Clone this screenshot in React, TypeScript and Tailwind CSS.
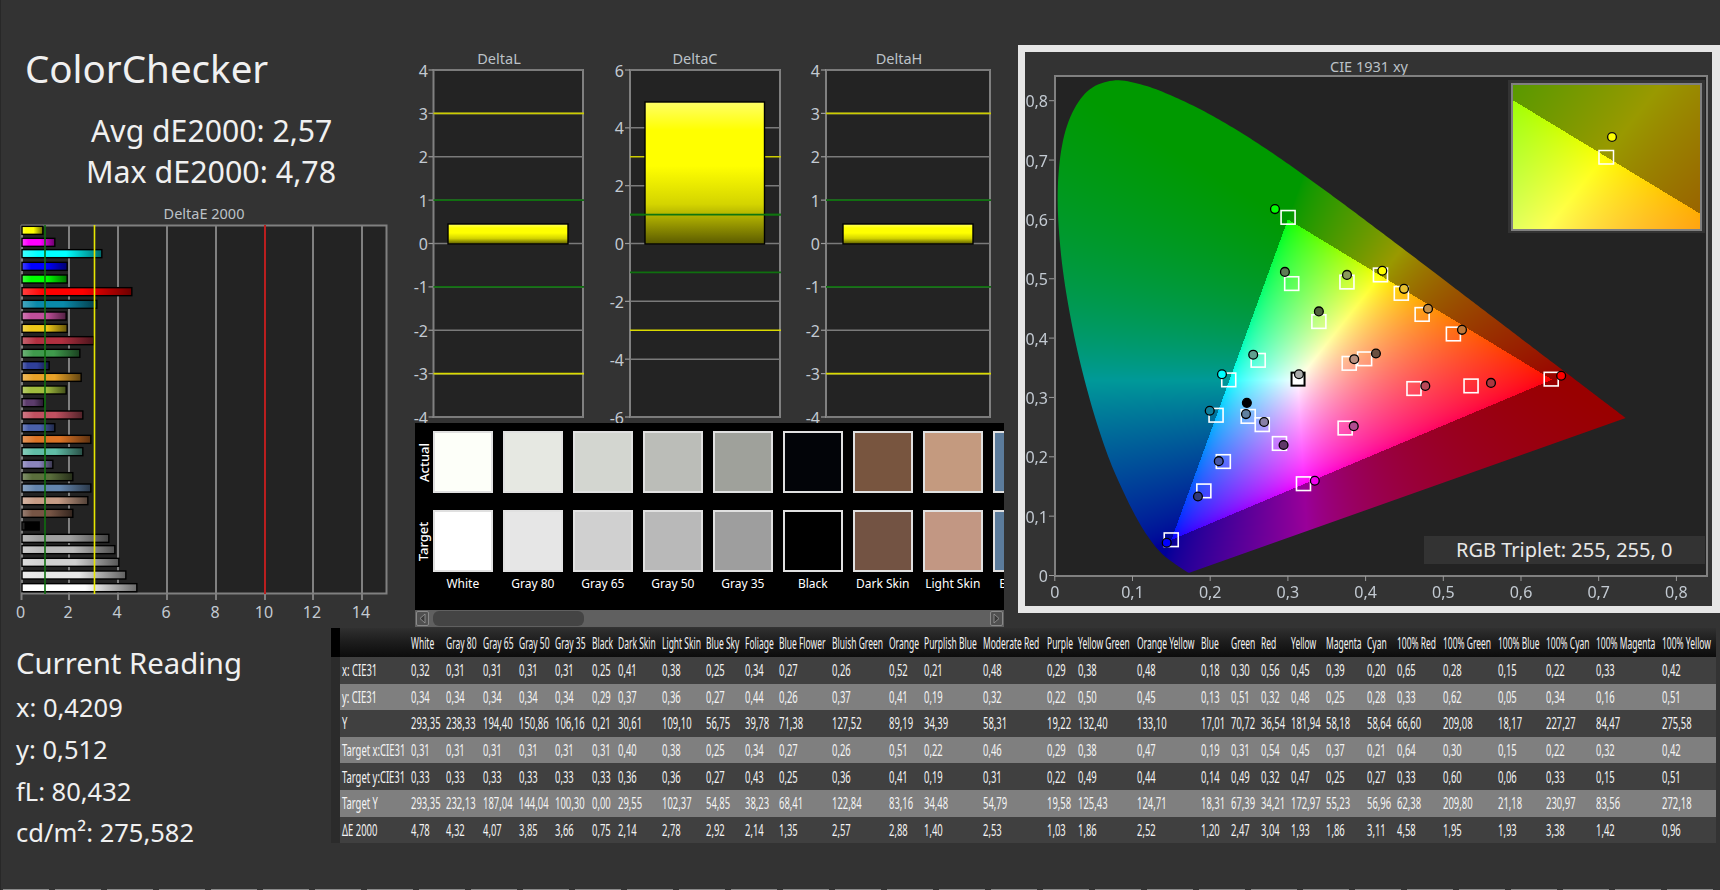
import { useEffect, useRef } from "react";

const LOCUS: [number, number][] = [
  [0.1741, 0.005], [0.1714, 0.0051], [0.1644, 0.0109], [0.1566, 0.0177], [0.144, 0.0297], [0.1355, 0.0399],
  [0.1241, 0.0578], [0.1096, 0.0868], [0.0913, 0.1327], [0.0687, 0.2007], [0.0454, 0.295], [0.0235, 0.4127], [0.0082, 0.5384],
  [0.0039, 0.6548], [0.0139, 0.7502], [0.0389, 0.812], [0.0743, 0.8338], [0.1142, 0.8262], [0.1547, 0.8059], [0.1929, 0.7816],
  [0.2296, 0.7543], [0.2658, 0.7243], [0.3016, 0.6923], [0.3373, 0.6589], [0.3731, 0.6245], [0.4087, 0.5896], [0.4441, 0.5547],
  [0.4788, 0.5202], [0.5125, 0.4866], [0.5448, 0.4544], [0.5752, 0.4242], [0.6029, 0.3965], [0.627, 0.3725], [0.6658, 0.334],
  [0.6915, 0.3083], [0.7079, 0.292], [0.726, 0.274], [0.7347, 0.2653],
];

function smooth(pts: [number, number][]): [number, number][] {
  const out: [number, number][] = [];
  for (let i = 0; i < pts.length - 1; i++) {
    const p0 = pts[Math.max(i - 1, 0)];
    const p1 = pts[i];
    const p2 = pts[i + 1];
    const p3 = pts[Math.min(i + 2, pts.length - 1)];
    for (let k = 0; k < 10; k++) {
      const t = k / 10;
      const f = (a: number, b: number, c: number, d: number) =>
        0.5 * (2 * b + (c - a) * t + (2 * a - 5 * b + 4 * c - d) * t * t + (3 * b - a - 3 * c + d) * t * t * t);
      out.push([f(p0[0], p1[0], p2[0], p3[0]), f(p0[1], p1[1], p2[1], p3[1])]);
    }
  }
  out.push(pts[pts.length - 1]);
  return out;
}

function shade(x: number, y: number): [number, number, number] {
  const X = x / y;
  const Z = (1 - x - y) / y;
  let r = 3.2406 * X - 1.5372 - 0.4986 * Z;
  let g = -0.9689 * X + 1.8758 + 0.0415 * Z;
  let b = 0.0557 * X - 0.204 + 1.057 * Z;
  const inside = Math.min(r, g, b) >= 0;
  r = Math.max(r, 0);
  g = Math.max(g, 0);
  b = Math.max(b, 0);
  const m = Math.max(r, g, b, 1e-6);
  if (inside) {
    const e = 0.66;
    return [255 * Math.pow(r / m, e), 255 * Math.pow(g / m, e), 255 * Math.pow(b / m, e)];
  }
  return [153 * Math.pow(r / m, 0.7), 153 * Math.pow(g / m, 0.7), 153 * (b / m)];
}

function CieCanvas({ w, h, x0, sx, y0, sy, clip, className }: { w: number; h: number; x0: number; sx: number; y0: number; sy: number; clip: boolean; className: string }) {
  const ref = useRef<HTMLCanvasElement>(null);
  useEffect(() => {
    const c = ref.current;
    if (!c) return;
    const ctx = c.getContext("2d");
    if (!ctx) return;
    const img = ctx.createImageData(w, h);
    for (let j = 0; j < h; j++) {
      for (let i = 0; i < w; i++) {
        const x = Math.max((i + 0.5 - x0) / sx, 0.001);
        const y = Math.max((y0 - j - 0.5) / sy, 0.002);
        const [r, g, b] = shade(x, y);
        const o = (j * w + i) * 4;
        img.data[o] = r;
        img.data[o + 1] = g;
        img.data[o + 2] = b;
        img.data[o + 3] = 255;
      }
    }
    ctx.putImageData(img, 0, 0);
    if (clip) {
      ctx.globalCompositeOperation = "destination-in";
      ctx.beginPath();
      smooth(LOCUS).forEach(([x, y], n) => {
        const px = x0 + x * sx;
        const py = y0 - y * sy;
        if (n === 0) ctx.moveTo(px, py);
        else ctx.lineTo(px, py);
      });
      ctx.closePath();
      ctx.fill();
    }
  }, [w, h, x0, sx, y0, sy, clip]);
  return <canvas ref={ref} width={w} height={h} className={className} />;
}

const BARS: [number, number, string][] = [
  [61, 130, "#ffff00"], [97, 166, "#ff00ff"], [131, 307, "#00ffff"], [169, 203, "#0000ff"], [207, 203, "#00ff00"], [245, 397, "#ff0000"],
  [283, 292, "#0a8aaa"], [318, 200, "#c04f9a"], [355, 203, "#eec818"], [392, 283, "#b03040"], [430, 241, "#3f9a4c"], [467, 149, "#2f3f98"],
  [502, 245, "#e8a228"], [540, 200, "#a0bc3e"], [578, 133, "#5c3c6c"], [615, 250, "#c05060"], [653, 166, "#4a60aa"], [688, 274, "#dc7426"],
  [725, 250, "#60bda6"], [763, 160, "#8a84bc"], [800, 220, "#5a6e3c"], [834, 274, "#6485ad"], [872, 265, "#c69c86"], [910, 220, "#775545"],
  [948, 119, "#000000"], [985, 328, "#a0a0a0"], [1019, 346, "#bbbbbb"], [1057, 358, "#d0d0d0"], [1095, 379, "#e6e6e6"], [1133, 412, "#ffffff"],
];

function mix(hex: string, target: number, t: number) {
  const n = parseInt(hex.slice(1), 16);
  const ch = [(n >> 16) & 255, (n >> 8) & 255, n & 255].map((v) => Math.round(v + (target - v) * t));
  return `rgb(${ch[0]},${ch[1]},${ch[2]})`;
}

const TICK = "absolute whitespace-nowrap leading-none text-[16px] text-[#c3cad2]";

function BarChart() {
  const ticks = [0, 2, 4, 6, 8, 10, 12, 14];
  const xs = [21.5, 69, 118, 167, 216, 265, 313, 362];
  return (
    <>
      <div className="absolute left-[21px] top-[206px] w-[366px] text-center text-[14.5px] leading-none text-[#bcc2c8]">DeltaE 2000</div>
      <svg className="absolute left-[20px] top-[224px] h-[378px] w-[369px]" viewBox="20 224 369 378">
        <defs>
          {BARS.map(([, , c], i) => (
            <linearGradient key={i} id={`b${i}`} x1="0" x2="1" y1="0" y2="0">
              <stop offset="0" stopColor={mix(c, 255, 0.25)} />
              <stop offset="0.2" stopColor={c} />
              <stop offset="0.55" stopColor={c} />
              <stop offset="1" stopColor={mix(c, 0, 0.58)} />
            </linearGradient>
          ))}
        </defs>
        <rect x="22" y="225.5" width="364" height="368" fill="#232323" />
        {xs.map((x, i) => (
          <line key={i} x1={x} x2={x} y1="225" y2="600" stroke="#808080" strokeWidth="2" />
        ))}
        <rect x="22" y="225.5" width="364.5" height="368" fill="none" stroke="#808080" strokeWidth="2" />
        {BARS.map(([c, e], i) => {
          const y = 210 + c / 3;
          const x2 = e / 3;
          return (
            <g key={i}>
              <rect x="22" y={y - 4} width={x2 - 22.5} height="8" fill={`url(#b${i})`} stroke="#000" strokeWidth="1.4" />
            </g>
          );
        })}
        <line x1="45" x2="45" y1="225" y2="594" stroke="#0f6f0f" strokeWidth="1.6" />
        <line x1="94.5" x2="94.5" y1="225" y2="594" stroke="#e6e600" strokeWidth="1.6" />
        <line x1="265" x2="265" y1="225" y2="594" stroke="#c01414" strokeWidth="1.8" />
      </svg>
      {ticks.map((t, i) => (
        <span key={t} className={`${TICK} -translate-x-1/2`} style={{ left: xs[i] - 1, top: 604 }}>
          {t}
        </span>
      ))}
    </>
  );
}

type DC = { title: string; l: number; r: number; max: number; step: number; bar: [number, number, number]; tc: number; lab: number };

function DeltaChart({ title, l, r, max, step, bar, tc, lab }: DC) {
  const s = 173.5 / max;
  const y = (v: number) => 243.5 - v * s;
  const vals: number[] = [];
  for (let v = -max; v <= max; v += step) vals.push(v);
  const lines: [number, string][] = [[1, "#0f6f0f"], [-1, "#0f6f0f"], [3, "#cccc00"], [-3, "#dada00"]];
  const id = `g${title}`;
  return (
    <>
      <div className="absolute whitespace-nowrap text-center text-[14.5px] leading-none text-[#bcc2c8] -translate-x-1/2" style={{ left: tc, top: 51 }}>
        {title}
      </div>
      <svg className="absolute left-[420px] top-[60px] h-[370px] w-[590px]" viewBox="420 60 590 370">
        <defs>
          <linearGradient id={id} x1="0" x2="0" y1="0" y2="1">
            <stop offset="0" stopColor="#ffff66" />
            <stop offset="0.2" stopColor="#ffff00" />
            <stop offset="0.45" stopColor="#ffff00" />
            <stop offset="0.72" stopColor="#d4d400" />
            <stop offset="1" stopColor="#5a5a00" />
          </linearGradient>
        </defs>
        <rect x={l} y="70" width={r - l} height="347" fill="#232323" stroke="#808080" strokeWidth="2" />
        {vals.map((v) => (
          <g key={v}>
            <line x1={l - 5} x2={l} y1={y(v)} y2={y(v)} stroke="#9a9a9a" strokeWidth="1.2" />
            <line x1={l} x2={r} y1={y(v)} y2={y(v)} stroke="#7a7a7a" strokeWidth="1.5" />
          </g>
        ))}
        {lines.map(([v, c]) => (
          <line key={v} x1={l} x2={r + 1} y1={y(v)} y2={y(v)} stroke={c} strokeWidth="1.6" />
        ))}
        <rect x={bar[0]} y={bar[2]} width={bar[1] - bar[0]} height={244 - bar[2]} fill={`url(#${id})`} stroke="#000" strokeWidth="1.4" />
        {max === 6 ? <line x1={l} x2={r + 1} y1={y(1)} y2={y(1)} stroke="#0f750f" strokeWidth="1.6" /> : null}
      </svg>
      {vals.map((v) => (
        <span key={v} className={`${TICK} -translate-x-full -translate-y-1/2`} style={{ left: lab, top: y(v) + 0.5 }}>
          {v}
        </span>
      ))}
    </>
  );
}

const SW: [string, string, string][] = [
  ["White", "#fdfff9", "#ffffff"],
  ["Gray 80", "#e6e8e2", "#e6e6e6"],
  ["Gray 65", "#d3d6d0", "#d0d0d0"],
  ["Gray 50", "#bbbdb8", "#b9b9b9"],
  ["Gray 35", "#9fa19b", "#9e9e9e"],
  ["Black", "#020408", "#000000"],
  ["Dark Skin", "#78553f", "#735343"],
  ["Light Skin", "#c49a7f", "#c29783"],
  ["Blue Sky", "#5b7b9b", "#5b7b9b"],
];

function Swatches() {
  return (
    <div className="absolute left-[415px] top-[423px] h-[204px] w-[589px] overflow-hidden bg-black">
      <div className="absolute left-[2px] top-[8px] flex h-[62px] w-[14px] items-center justify-center">
        <span className="-rotate-90 text-[13px] font-medium leading-none text-white">Actual</span>
      </div>
      <div className="absolute left-[2px] top-[87px] flex h-[62px] w-[14px] items-center justify-center">
        <span className="-rotate-90 text-[13px] font-medium leading-none text-white">Target</span>
      </div>
      {SW.map(([name, a, t], i) => (
        <div key={name} className="absolute top-0 h-[187px] w-[60px]" style={{ left: 17.8 + i * 70 }}>
          <div className="absolute left-0 top-[8px] box-border h-[62px] w-[60px] border-2 border-[#e0e0e0]" style={{ background: a }} />
          <div className="absolute left-0 top-[87px] box-border h-[62px] w-[60px] border-2 border-[#e0e0e0]" style={{ background: t }} />
          <div className="absolute left-[-10px] top-[154px] w-[80px] whitespace-nowrap text-center text-[12px] leading-[13px] text-white">{name}</div>
        </div>
      ))}
      <div className="absolute bottom-0 left-0 h-[17px] w-full bg-[#606060]">
        <div className="absolute left-[1px] top-[1px] h-[15px] w-[13px] rounded-[2px] border border-[#8a8a8a] bg-[#505050]">
          <svg className="h-full w-full" viewBox="0 0 11 13">
            <path d="M8 2 L3 6.5 L8 11 Z" fill="#3a3a3a" stroke="#9a9a9a" strokeWidth="0.8" />
          </svg>
        </div>
        <div className="absolute left-[18px] top-[1px] h-[15px] w-[151px] rounded-[6px] bg-[#444444]" />
        <div className="absolute right-[1px] top-[1px] h-[15px] w-[13px] rounded-[2px] border border-[#8a8a8a] bg-[#505050]">
          <svg className="h-full w-full" viewBox="0 0 11 13">
            <path d="M3 2 L8 6.5 L3 11 Z" fill="#3a3a3a" stroke="#9a9a9a" strokeWidth="0.8" />
          </svg>
        </div>
      </div>
    </div>
  );
}

const SQUARES: [number, number][] = [
  [614, 498], [622, 674], [744, 670], [818, 651], [864, 700], [910, 756], [979, 808], [783, 874], [749, 886], [682, 775], [548, 878],
  [483, 930], [892, 953], [1018, 946], [1195, 928], [455, 1024], [526, 1027], [557, 1049], [740, 1058], [595, 1099], [471, 1147],
  [648, 1206], [428, 1225], [356, 1355],
];
const DOTS: [number, number, string][] = [
  [585, 476, "#00ff00"], [607, 643, "#5c7c54"], [744, 651, "#8a9a5a"], [822, 640, "#ffff00"], [870, 688, "#e8c030"], [923, 741, "#c89048"],
  [998, 797, "#c07838"], [808, 860, "#6a5040"], [760, 875, "#b89080"], [682, 748, "#50603c"], [537, 863, "#60a090"], [468, 915, "#00ffff"],
  [638, 915, "#aaaaaa"], [917, 946, "#b84858"], [1062, 938, "#a83840"], [1217, 919, "#ff0000"], [441, 1012, "#107f9c"], [523, 991, "#000000"],
  [521, 1021, "#6080a0"], [561, 1042, "#8880a8"], [759, 1053, "#b04c90"], [604, 1103, "#603868"], [461, 1146, "#4858a8"], [673, 1198, "#ee00ee"],
  [415, 1240, "#303878"], [346, 1363, "#0000ff"],
];
const zx = (v: number) => 1010 + v / 2.208;
const zy = (v: number) => 30 + v / 2.658;

function Cie() {
  const xt = ["0", "0,1", "0,2", "0,3", "0,4", "0,5", "0,6", "0,7", "0,8"];
  return (
    <>
      <div className="absolute left-[1018px] top-[45px] box-border h-[568px] w-[702px] border-y-[7px] border-l-[7px] border-r-[8px] border-[#e6e6e6] bg-[#333333]" />
      <div className="absolute left-[1054px] top-[59px] w-[630px] text-center text-[14.5px] leading-none text-[#bcc2c8]">CIE 1931 xy</div>
      <div className="absolute left-[1054px] top-[75px] h-[502px] w-[654px] bg-[#232323]" />
      <CieCanvas className="absolute left-[1054px] top-[76px] h-[500px] w-[654px]" w={654} h={500} x0={0.8} sx={777} y0={499.5} sy={593.5} clip />
      <div className="absolute left-[1054px] top-[75px] box-border h-[502px] w-[654px] border-2 border-[#808080]" />
      <svg className="absolute left-[1040px] top-[70px] h-[520px] w-[680px]" viewBox="1040 70 680 520">
        {xt.map((_, i) => (
          <g key={i}>
            <line x1={1054.8 + i * 77.7} x2={1054.8 + i * 77.7} y1="576" y2="581" stroke="#9a9a9a" />
            <line x1="1049" x2="1054" y1={575.5 - i * 59.35} y2={575.5 - i * 59.35} stroke="#9a9a9a" />
          </g>
        ))}
        {SQUARES.map(([a, b], i) => (
          <rect key={i} x={zx(a) - 7} y={zy(b) - 6.8} width="14" height="13.6" fill="none" stroke="#fff" strokeWidth="1.6" />
        ))}
        <rect x={zx(636) - 6.5} y={zy(928) - 6.5} width="13" height="13" fill="#fff" stroke="#000" strokeWidth="2" />
        {DOTS.map(([a, b, c], i) => (
          <ellipse key={i} cx={zx(a)} cy={zy(b)} rx="4.4" ry="4.4" fill={c} stroke="#000" strokeWidth="1.3" />
        ))}
      </svg>
      {xt.map((t, i) => (
        <span key={t} className={`${TICK} -translate-x-1/2`} style={{ left: 1054.8 + i * 77.7, top: 584 }}>
          {t}
        </span>
      ))}
      {xt.map((t, i) => (
        <span key={t} className={`${TICK} -translate-x-full -translate-y-1/2`} style={{ left: 1048, top: 576 - i * 59.35 }}>
          {t}
        </span>
      ))}
      <div className="absolute left-[1508px] top-[80px] h-[153px] w-[197px] bg-[#333333]" />
      <CieCanvas className="absolute left-[1511px] top-[83px] h-[148px] w-[191px]" w={191} h={148} x0={-703} sx={1900} y0={806} sy={1451} clip={false} />
      <div className="absolute left-[1511px] top-[83px] box-border h-[148px] w-[191px] border-2 border-[#808080]" />
      <svg className="absolute left-[1511px] top-[83px] h-[148px] w-[191px]" viewBox="1511 83 191 148">
        <rect x="1599" y="150.5" width="14.5" height="13.5" fill="none" stroke="#fff" strokeWidth="1.5" />
        <circle cx="1612" cy="137" r="4.4" fill="#ffff00" stroke="#111" strokeWidth="1.4" />
      </svg>
      <div className="absolute left-[1424px] top-[536px] flex h-[28px] w-[281px] items-center bg-[#333333] pl-[32px]">
        <span className="whitespace-nowrap text-[20px] leading-none text-[#e8e8e8]">RGB Triplet: 255, 255, 0</span>
      </div>
    </>
  );
}

const HEAD = ["White", "Gray 80", "Gray 65", "Gray 50", "Gray 35", "Black", "Dark Skin", "Light Skin", "Blue Sky", "Foliage", "Blue Flower", "Bluish Green", "Orange", "Purplish Blue", "Moderate Red", "Purple", "Yellow Green", "Orange Yellow", "Blue", "Green", "Red", "Yellow", "Magenta", "Cyan", "100% Red", "100% Green", "100% Blue", "100% Cyan", "100% Magenta", "100% Yellow"];
const COLX = [410.7, 446, 482.7, 519, 555.3, 591.7, 618.3, 661.7, 706, 745, 779.3, 832.3, 889.3, 924.3, 983.3, 1046.7, 1078.3, 1137.3, 1201, 1230.7, 1260.7, 1290.7, 1325.7, 1367.3, 1397.3, 1442.7, 1498, 1545.7, 1595.7, 1662.3];
const ROWS: [string, string][] = [
  ["x: CIE31", "0,32 0,31 0,31 0,31 0,31 0,25 0,41 0,38 0,25 0,34 0,27 0,26 0,52 0,21 0,48 0,29 0,38 0,48 0,18 0,30 0,56 0,45 0,39 0,20 0,65 0,28 0,15 0,22 0,33 0,42"],
  ["y: CIE31", "0,34 0,34 0,34 0,34 0,34 0,29 0,37 0,36 0,27 0,44 0,26 0,37 0,41 0,19 0,32 0,22 0,50 0,45 0,13 0,51 0,32 0,48 0,25 0,28 0,33 0,62 0,05 0,34 0,16 0,51"],
  ["Y", "293,35 238,33 194,40 150,86 106,16 0,21 30,61 109,10 56,75 39,78 71,38 127,52 89,19 34,39 58,31 19,22 132,40 133,10 17,01 70,72 36,54 181,94 58,18 58,64 66,60 209,08 18,17 227,27 84,47 275,58"],
  ["Target x:CIE31", "0,31 0,31 0,31 0,31 0,31 0,31 0,40 0,38 0,25 0,34 0,27 0,26 0,51 0,22 0,46 0,29 0,38 0,47 0,19 0,31 0,54 0,45 0,37 0,21 0,64 0,30 0,15 0,22 0,32 0,42"],
  ["Target y:CIE31", "0,33 0,33 0,33 0,33 0,33 0,33 0,36 0,36 0,27 0,43 0,25 0,36 0,41 0,19 0,31 0,22 0,49 0,44 0,14 0,49 0,32 0,47 0,25 0,27 0,33 0,60 0,06 0,33 0,15 0,51"],
  ["Target Y", "293,35 232,13 187,04 144,04 100,30 0,00 29,55 102,37 54,85 38,23 68,41 122,84 83,16 34,48 54,79 19,58 125,43 124,71 18,31 67,39 34,21 172,97 55,23 56,96 62,38 209,80 21,18 230,97 83,56 272,18"],
  ["ΔE 2000", "4,78 4,32 4,07 3,85 3,66 0,75 2,14 2,78 2,92 2,14 1,35 2,57 2,88 1,40 2,53 1,03 1,86 2,52 1,20 2,47 3,04 1,93 1,86 3,11 4,58 1,95 1,93 3,38 1,42 0,96"],
];

const CELL = "absolute top-1/2 origin-left -translate-y-1/2 scale-x-[0.59] whitespace-nowrap text-[16px] leading-none text-[#f4f4f4]";
const HCELL = "absolute top-1/2 origin-left -translate-y-1/2 scale-x-[0.53] whitespace-nowrap text-[16px] leading-none text-[#f4f4f4]";

function DataTable() {
  return (
    <div className="absolute left-[331px] top-[628px] w-[1385px]">
      <div className="relative h-[29px] bg-gradient-to-b from-[#303030] via-[#1c1c1c] to-[#0c0c0c]">
        <div className="absolute left-0 top-0 h-full w-[9px] bg-black" />
        {HEAD.map((h, i) => (
          <span key={h} className={HCELL} style={{ left: COLX[i] - 331 }}>
            {h}
          </span>
        ))}
      </div>
      {ROWS.map(([label, vals], r) => (
        <div key={label} className={`relative h-[26.6px] ${r % 2 ? "bg-[#7f7f7f]" : "bg-[#404040]"}`}>
          <div className="absolute left-0 top-0 h-full w-[9px] bg-[#2b2b2b]" />
          <span className={CELL} style={{ left: 11 }}>
            {label}
          </span>
          {vals.split(" ").map((v, i) => (
            <span key={i} className={CELL} style={{ left: COLX[i] - 331 }}>
              {v}
            </span>
          ))}
        </div>
      ))}
    </div>
  );
}

export default function App() {
  return (
    <div className="relative h-[890px] w-[1720px] overflow-hidden bg-[#333333] font-['Noto_Sans',sans-serif] text-white">
      <div className="absolute left-0 top-0 h-full w-[1px] bg-[#282828]" />
      <div className="absolute left-[25px] top-[49px] whitespace-nowrap text-[38.5px] leading-none text-[#f0f0f0]">ColorChecker</div>
      <div className="absolute left-[91px] top-[116px] whitespace-nowrap text-[30.2px] leading-none text-[#f0f0f0]">Avg dE2000: 2,57</div>
      <div className="absolute left-[86px] top-[157px] whitespace-nowrap text-[30.4px] leading-none text-[#f0f0f0]">Max dE2000: 4,78</div>
      <BarChart />
      <DeltaChart title="DeltaL" l={433.5} r={583} max={4} step={1} bar={[448, 568, 224]} tc={499} lab={428} />
      <DeltaChart title="DeltaC" l={630} r={780} max={6} step={2} bar={[645, 764.5, 102]} tc={695} lab={624} />
      <DeltaChart title="DeltaH" l={826} r={990} max={4} step={1} bar={[843, 973, 224]} tc={899} lab={820} />
      <Swatches />
      <Cie />
      <DataTable />
      <div className="absolute left-[16px] top-[649px] whitespace-nowrap text-[29.3px] leading-none text-[#f0f0f0]">Current Reading</div>
      <div className="absolute left-[16px] top-[695px] whitespace-nowrap text-[25.5px] leading-none text-[#f0f0f0]">x: 0,4209</div>
      <div className="absolute left-[16px] top-[737px] whitespace-nowrap text-[25.5px] leading-none text-[#f0f0f0]">y: 0,512</div>
      <div className="absolute left-[16px] top-[779px] whitespace-nowrap text-[25.5px] leading-none text-[#f0f0f0]">fL: 80,432</div>
      <div className="absolute left-[16px] top-[820px] whitespace-nowrap text-[25.5px] leading-none text-[#f0f0f0]">cd/m²: 275,582</div>
      <div className="absolute bottom-0 left-[3px] flex h-[1px] gap-[6px]">
        {Array.from({ length: 33 }).map((_, i) => (
          <span key={i} className="h-full w-[46px] bg-[#8a8a8a]" />
        ))}
      </div>
    </div>
  );
}
